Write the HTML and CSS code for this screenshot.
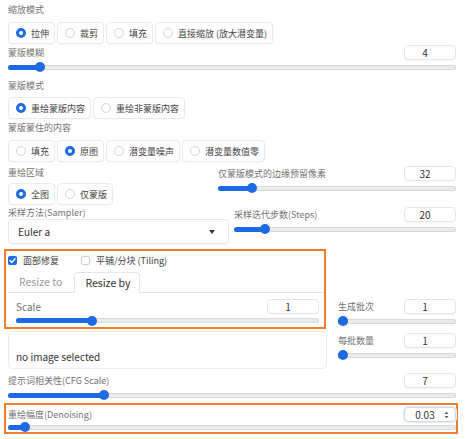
FILE: index.html
```html
<!DOCTYPE html>
<html lang="zh">
<head>
<meta charset="utf-8">
<title>img2img settings</title>
<link rel="stylesheet" href="styles.css">
</head>
<body>
<div class="page">
  <div class="label">缩放模式</div>
  <div class="radios r-resize">
    <span class="radio"><span class="dot on"></span>拉伸</span>
    <span class="radio"><span class="dot"></span>裁剪</span>
    <span class="radio"><span class="dot"></span>填充</span>
    <span class="radio"><span class="dot"></span>直接缩放 (放大潜变量)</span>
  </div>

  <div class="field f-blur">
    <div class="head"><span class="label">蒙版模糊</span><span class="num">4</span></div>
    <div class="slider"><div class="track"><div class="fill" style="width:32px"></div></div><span class="thumb" style="left:27px"></span></div>
  </div>

  <div class="label l-mask-mode">蒙版模式</div>
  <div class="radios r-mask-mode">
    <span class="radio"><span class="dot on"></span>重绘蒙版内容</span>
    <span class="radio"><span class="dot"></span>重绘非蒙版内容</span>
  </div>

  <div class="label l-fill">蒙版蒙住的内容</div>
  <div class="radios r-fill">
    <span class="radio"><span class="dot"></span>填充</span>
    <span class="radio"><span class="dot on"></span>原图</span>
    <span class="radio"><span class="dot"></span>潜变量噪声</span>
    <span class="radio"><span class="dot"></span>潜变量数值零</span>
  </div>

  <div class="row-area">
    <div class="col">
      <div class="label l-area">重绘区域</div>
      <div class="radios r-area">
        <span class="radio"><span class="dot on"></span>全图</span>
        <span class="radio"><span class="dot"></span>仅蒙版</span>
      </div>
    </div>
    <div class="field f-padding">
      <div class="head"><span class="label">仅蒙版模式的边缘预留像素</span><span class="num">32</span></div>
      <div class="slider"><div class="track"><div class="fill" style="width:34px"></div></div><span class="thumb" style="left:29px"></span></div>
    </div>
  </div>

  <div class="row-sampler">
    <div class="col">
      <div class="label l-sampler">采样方法(Sampler)</div>
      <div class="dropdown">
        <span>Euler a</span>
        <svg class="caret" width="6" height="4" viewBox="0 0 6 4"><path d="M0 0 L6 0 L3 4 Z" fill="#333"/></svg>
      </div>
    </div>
    <div class="field f-steps">
      <div class="head"><span class="label">采样迭代步数(Steps)</span><span class="num">20</span></div>
      <div class="slider"><div class="track"><div class="fill" style="width:31px"></div></div><span class="thumb" style="left:26px"></span></div>
    </div>
  </div>

  <div class="row-main">
    <div class="col">
      <div class="mark face-box">
        <div class="checks">
          <span class="check on"><svg width="9" height="9" viewBox="0 0 9 9"><path d="M2 4.6 L3.8 6.4 L7 2.8" fill="none" stroke="#fff" stroke-width="1.4" stroke-linecap="round" stroke-linejoin="round"/></svg></span>
          <span class="check-text">面部修复</span>
          <span class="check"></span>
          <span class="check-text">平铺/分块 (Tiling)</span>
        </div>
        <div class="tabs">
          <span class="tab">Resize to</span>
          <span class="tab active">Resize by</span>
        </div>
        <div class="tab-panel">
          <div class="head"><span class="label label-latin">Scale</span><span class="num">1</span></div>
          <div class="slider s-scale"><div class="track"><div class="fill" style="width:76px"></div></div><span class="thumb" style="left:71px"></span></div>
        </div>
      </div>
      <div class="upload">no image selected</div>
    </div>
    <div class="col">
      <div class="field f-batch">
        <div class="head"><span class="label">生成批次</span><span class="num">1</span></div>
        <div class="slider"><div class="track"><div class="fill" style="width:4px"></div></div><span class="thumb" style="left:0"></span></div>
      </div>
      <div class="field f-size">
        <div class="head"><span class="label">每批数量</span><span class="num">1</span></div>
        <div class="slider"><div class="track"><div class="fill" style="width:4px"></div></div><span class="thumb" style="left:0"></span></div>
      </div>
    </div>
  </div>

  <div class="field f-cfg">
    <div class="head"><span class="label">提示词相关性(CFG Scale)</span><span class="num">7</span></div>
    <div class="slider"><div class="track"><div class="fill" style="width:96px"></div></div><span class="thumb" style="left:91px"></span></div>
  </div>

  <div class="mark denoise-box">
    <div class="head"><span class="label">重绘幅度(Denoising)</span><span class="num focus">0.03<svg class="spin" width="5" height="8" viewBox="0 0 5 8"><path d="M0.5 3 L2.5 0.8 L4.5 3 Z M0.5 5 L2.5 7.2 L4.5 5 Z" fill="#555"/></svg></span></div>
    <div class="slider s-denoise"><div class="track"><div class="fill" style="width:17px"></div></div><span class="thumb" style="left:12px"></span></div>
  </div>
</div>
</body>
</html>
```

FILE: styles.css
```css
body {
  margin: 0;
  background: #ffffff;
  font-family: "Noto Sans CJK SC", "Noto Sans", sans-serif;
  color: #444;
}

.page {
  width: 448px;
  margin-left: 8px;
  padding-top: 2px;
}

.label {
  font-size: 9px;
  line-height: 16px;
  color: #737373;
  white-space: nowrap;
}

.label-latin {
  font-size: 10px;
  color: #707070;
}

/* radio groups */
.radios {
  display: flex;
  gap: 2px;
  height: 22px;
}

.radio {
  display: flex;
  align-items: center;
  gap: 5px;
  padding: 0 5px 0 7px;
  border: 1px solid #ebebeb;
  border-radius: 4px;
  background: #fff;
  box-shadow: 0 1px 2px rgba(0, 0, 0, 0.03);
  font-size: 9px;
  color: #444;
  white-space: nowrap;
}

.dot {
  width: 10px;
  height: 10px;
  box-sizing: border-box;
  border-radius: 50%;
  border: 1px solid #d4d4d4;
  background: #fff;
  flex: none;
}

.dot.on {
  border: 3px solid #1c6ae4;
}

.r-resize { margin-top: 4px; }
.f-blur { margin-top: 1px; }
.l-mask-mode { margin-top: 4px; }
.r-mask-mode { margin-top: 3px; }
.l-fill { margin-top: 1px; }
.r-fill { margin-top: 4px; }

/* slider fields */
.head {
  display: flex;
  justify-content: space-between;
  align-items: center;
  height: 15px;
}

.num {
  position: relative;
  width: 52px;
  height: 15px;
  box-sizing: border-box;
  border: 1px solid #e6e6e6;
  border-radius: 4px;
  box-shadow: 0 1px 1px rgba(0, 0, 0, 0.03);
  padding-right: 10px;
  font-size: 10px;
  line-height: 13px;
  text-align: center;
  color: #333;
  background: #fff;
}

.num.focus {
  border-color: #cad9f0;
  box-shadow: 0 0 0 1px #e6eefa;
}

.spin {
  position: absolute;
  right: 6px;
  top: 3px;
}

.slider {
  position: relative;
  height: 14px;
  display: flex;
  align-items: center;
}

.track {
  flex: 1;
  height: 5px;
  border-radius: 3px;
  background: #ebebeb;
  box-shadow: inset 0 0 0 1px #d9d9d9;
}

.fill {
  height: 100%;
  border-radius: 3px;
  background: #1c6ae4;
}

.thumb {
  position: absolute;
  top: 50%;
  width: 10px;
  height: 10px;
  margin-top: -5px;
  border-radius: 50%;
  background: #1c6ae4;
}

/* two-column rows */
.row-area {
  display: grid;
  grid-template-columns: 202px 1fr;
  column-gap: 8px;
  margin-top: 1px;
}

.l-area { margin-top: 2px; }
.r-area { margin-top: 2px; }
.f-padding { margin-top: 3px; }

.row-sampler {
  display: grid;
  grid-template-columns: 221px 1fr;
  column-gap: 5px;
}

.l-sampler {
  margin-top: 1px;
  line-height: 13px;
}

.dropdown {
  display: flex;
  justify-content: space-between;
  align-items: center;
  height: 25px;
  box-sizing: border-box;
  padding: 0 13px 0 9px;
  border: 1px solid #e8e8e8;
  border-radius: 4px;
  box-shadow: 0 1px 2px rgba(0, 0, 0, 0.04);
  font-size: 10px;
  color: #333;
}

.f-steps { margin-top: 2px; }

.row-main {
  display: grid;
  grid-template-columns: 319px 1fr;
  column-gap: 11px;
  margin-top: 5px;
}

/* orange annotation boxes */
.mark {
  box-sizing: border-box;
  border: 2px solid #f07c2e;
  margin-left: -4px;
}

.face-box {
  width: 322px;
  padding: 1px 0 0 2px;
}

.checks {
  display: flex;
  align-items: center;
  height: 16px;
  font-size: 9px;
  color: #444;
}

.check {
  width: 9px;
  height: 9px;
  box-sizing: border-box;
  border: 1px solid #cfcfcf;
  border-radius: 2px;
  background: #fff;
  flex: none;
}

.check.on {
  border: none;
  background: #1c6ae4;
}

.check.on svg { display: block; }

.check-text {
  margin-left: 6px;
  margin-right: 22px;
  white-space: nowrap;
}

.tabs {
  display: flex;
  align-items: flex-end;
  height: 21px;
  margin-top: 4px;
  box-sizing: border-box;
  border-bottom: 1px solid #e6e6e6;
}

.tab {
  height: 20px;
  box-sizing: border-box;
  padding: 0 12px 0 11px;
  font-size: 10.5px;
  line-height: 19px;
  color: #9a9a9a;
}

.tab.active {
  height: 21px;
  margin-bottom: -1px;
  padding: 0 8px 0 10px;
  border: 1px solid #e6e6e6;
  border-bottom: 1px solid #fff;
  border-radius: 4px 4px 0 0;
  background: #fff;
  color: #333;
}

.tab-panel {
  padding: 6px 5px 0 8px;
}

.s-scale { height: 13px; }

.upload {
  margin-top: 2px;
  height: 38px;
  box-sizing: border-box;
  padding: 17px 0 0 7px;
  border: 1px solid #ededed;
  border-radius: 4px;
  font-size: 10px;
  line-height: 16px;
  color: #333;
}

.f-batch { margin-top: 50px; }
.f-size { margin-top: 5px; }

.f-cfg { margin-top: 4px; }

.denoise-box {
  width: 454px;
  margin-top: 1px;
  padding: 2px 0 0 2px;
}

.s-denoise { height: 10px; }
```
